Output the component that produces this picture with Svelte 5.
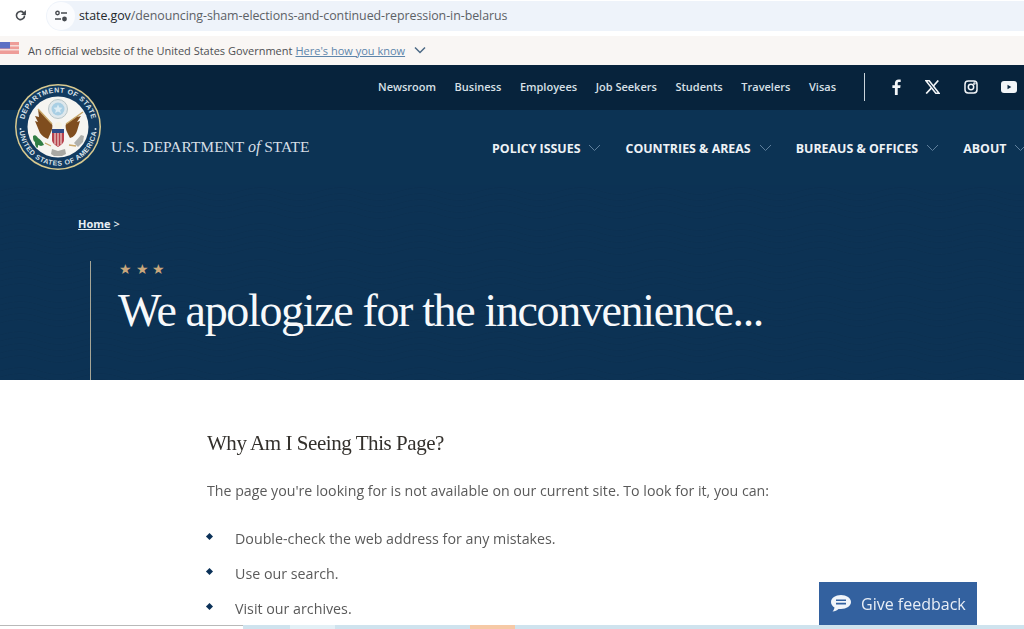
<script>
  const utility = ['Newsroom', 'Business', 'Employees', 'Job Seekers', 'Students', 'Travelers', 'Visas'];
  const mainNav = ['POLICY ISSUES', 'COUNTRIES & AREAS', 'BUREAUS & OFFICES', 'ABOUT'];
  const tips = ['Double-check the web address for any mistakes.', 'Use our search.', 'Visit our archives.'];
  const strip = [
    { w: 47, c: '#cfe3ee' },
    { w: 45, c: '#e3f0f6' },
    { w: 135, c: '#cfe3ee' },
    { w: 45, c: '#f6c9a6' },
    { w: 509, c: '#cfe3ee' }
  ];
</script>

<div class="page">
  <div class="browser">
    <svg class="reload" width="13" height="13" viewBox="0 0 24 24" fill="none" stroke="#474b50" stroke-width="3">
      <path d="M19.500 12a7.500 7.500 0 1 1-2.200-5.300L20 9.400" />
      <path d="M22 2v9h-9z" fill="#474b50" stroke="none" />
    </svg>
    <div class="omnibox">
      <span class="site-chip">
        <svg width="14" height="12" viewBox="0 0 14 12" fill="none" stroke="#474b50" stroke-width="1.400">
          <circle cx="3.500" cy="3" r="1.700" />
          <path d="M7 3h6M1 9h6" />
          <circle cx="10.500" cy="9" r="1.700" fill="#474b50" />
        </svg>
      </span>
      <span class="url"><b>state.gov</b>/denouncing-sham-elections-and-continued-repression-in-belarus</span>
    </div>
  </div>

  <div class="gov-banner">
    <svg class="flag" width="19" height="12" viewBox="0 0 19 12">
      <rect width="19" height="12" fill="#ee9c98" />
      <rect y="3" width="19" height="1.500" fill="#f6dcd8" />
      <rect y="7" width="19" height="1.500" fill="#f6dcd8" />
      <rect width="10" height="6.500" fill="#5b6fc4" />
    </svg>
    <span>An official website of the United States Government</span>
    <a href="#top">Here's how you know</a>
    <svg class="caret" width="12" height="8" viewBox="0 0 12 8" fill="none" stroke="#4d6a86" stroke-width="1.500">
      <path d="M1 1.500l5 5 5-5" />
    </svg>
  </div>

  <header class="site-head">
    <div class="utility">
      <nav class="utility-links">
        {#each utility as item}
          <a href="#top">{item}</a>
        {/each}
      </nav>
      <div class="socials">
        <svg width="12" height="16" viewBox="0 0 12 16" fill="#f2f5f8"><path d="M7.700 16V9h2.500l.4-2.800H7.700V4.500c0-.8.3-1.400 1.400-1.400h1.600V.6C10.400.5 9.500.4 8.600.4 6.400.4 4.900 1.700 4.900 4.200v2H2.400V9h2.500v7z" /></svg>
        <svg width="15" height="14" viewBox="0 0 15 14" fill="none" stroke="#f2f5f8"><path d="M1 .8h3.200l9.800 12.400h-3.200z" stroke-width="1.500" /><path d="M13.300.5L8.400 6M6.300 8.200L1.200 13.500" stroke-width="1.700" /></svg>
        <svg width="14" height="14" viewBox="0 0 14 14" fill="none" stroke="#f2f5f8" stroke-width="1.500"><rect x="1" y="1" width="12" height="12" rx="3.200" /><circle cx="7" cy="7" r="2.700" /><circle cx="10.400" cy="3.600" r=".5" /></svg>
        <svg width="16" height="12" viewBox="0 0 16 12"><rect width="16" height="12" rx="3" fill="#f2f5f8" /><path d="M6.500 3.700v4.600L10.300 6z" fill="#0a2740" /></svg>
      </div>
    </div>

    <div class="brand-row">
      <svg class="seal" width="88" height="88" viewBox="0 0 88 88">
        <defs>
          <path id="arcTop" d="M44 44m-34.500 0a34.500 34.500 0 0 1 69 0" />
          <path id="arcBottom" d="M44 44m-38.700 0a38.700 38.700 0 0 0 77.400 0" />
        </defs>
        <circle cx="44" cy="44" r="43" fill="#d8c98f" />
        <circle cx="44" cy="44" r="41.500" fill="#123a5f" />
        <circle cx="44" cy="44" r="30.500" fill="#f6f5f1" />
        <text class="seal-text"><textPath href="#arcTop" startOffset="50%" text-anchor="middle">DEPARTMENT OF STATE</textPath></text>
        <text class="seal-text"><textPath href="#arcBottom" startOffset="50%" text-anchor="middle">UNITED STATES OF AMERICA</textPath></text>
        <circle cx="6.500" cy="46" r="1" fill="#dbe3ea" />
        <circle cx="81.500" cy="46" r="1" fill="#dbe3ea" />
        <!-- crest and rays -->
        <circle cx="44" cy="26" r="9.500" fill="#dfe8ec" stroke="#b9c6c8" stroke-width="1" />
        <circle cx="44" cy="26" r="6.500" fill="#a9cfe4" />
        <path d="M44 21.500l1.300 3 3.300.3-2.500 2.100.8 3.200-2.900-1.700-2.900 1.700.8-3.200-2.500-2.100 3.300-.3z" fill="#dcecf4" />
        <!-- wings -->
        <path d="M24 26l14 15c1 2 0 6-1 8l-3 7c-3-1-6-3-8-6l-5-12 3 1-3-6 4 1z" fill="#7f4d1e" />
        <path d="M69 29L52 41c-1 2 0 6 1 8l3 6c4-1 6-4 7-7l3-10-3 1 4-6-4 1z" fill="#7f4d1e" />
        <path d="M24 26l14 15M69 29L52 41" stroke="#c9a86a" stroke-width="1.400" fill="none" />
        <circle cx="44.500" cy="42.500" r="3.500" fill="#f7f3e4" />
        <!-- shield -->
        <path d="M38 46h12v11c0 3-3 5-6 7-3-2-6-4-6-7z" fill="#b8404c" />
        <path d="M38 46h12v4H38z" fill="#2e4a86" />
        <path d="M41 50v11.500M44 50v13M47 50v11.500" stroke="#f4f1e6" stroke-width="1" />
        <!-- olive branch, arrows, tail -->
        <path d="M19 53c2-2 4 0 5 2 2 1 4 3 6 7l-3 1-3-1c0 2 0 3-1 3-2-2-2-4-2-6-2-1-2-4-2-6z" fill="#2f7d43" />
        <path d="M60 60l7-8 3 1-1 6-5 5z" fill="#aeb0ad" />
        <path d="M31 60l6 3M62 63l-7-1" stroke="#c9a86a" stroke-width="1.300" />
        <path d="M38 66l6 2 7-2 1 5-4 2h-8l-3-2z" fill="#a9a8a3" />
      </svg>
      <span class="wordmark">U.S. DEPARTMENT <i>of</i> STATE</span>
      <nav class="main-nav">
        {#each mainNav as item}
          <a href="#top">{item}
            <svg width="13" height="8" viewBox="0 0 13 8" fill="none" stroke="#5f7f9c"><path d="M1 1l5.500 5.500L12 1" /></svg>
          </a>
        {/each}
      </nav>
    </div>
  </header>

  <section class="hero">
    <div class="crumbs"><a href="#top">Home</a> &gt;</div>
    <div class="title-block">
      <div class="stars">★ ★ ★</div>
      <h1>We apologize for the inconvenience...</h1>
    </div>
  </section>

  <main class="content">
    <h2>Why Am I Seeing This Page?</h2>
    <p>The page you're looking for is not available on our current site. To look for it, you can:</p>
    <ul>
      {#each tips as tip}
        <li>{tip}</li>
      {/each}
    </ul>
  </main>

  <div class="strip">
    <span class="strip-start"></span>
    {#each strip as seg}
      <span style="width:{seg.w}px;background:{seg.c}"></span>
    {/each}
  </div>

  <button class="feedback">
    <svg width="22" height="19" viewBox="0 0 22 19">
      <path d="M11 1C5.500 1 1 3.900 1 8c0 2.300 1.400 4.200 3.500 5.500C4.300 15 3.500 16.500 2.500 17.500c2.500-.2 4.500-1.200 6-2.600.8.100 1.600.100 2.500.100 5.500 0 10-3 10-7S16.500 1 11 1z" fill="#f1f5fa" />
      <path d="M6 6.200h10M6 9.600h10" stroke="#33619f" stroke-width="1.600" />
    </svg>
    Give feedback
  </button>
</div>

<style>
  :global(body) {
    margin: 0;
    background: #fff;
  }

  .page {
    position: relative;
    display: flex;
    flex-direction: column;
    width: 1024px;
    height: 629px;
    overflow: hidden;
    font-family: "Open Sans", "Liberation Sans", sans-serif;
    filter: blur(0.35px);
  }

  a {
    color: inherit;
    text-decoration: none;
  }

  .browser {
    display: flex;
    align-items: center;
    flex: 0 0 36px;
    padding: 0 0 5px 14px;
    box-sizing: border-box;
    background: #fff;
  }

  .reload {
    margin-right: 19px;
  }

  .omnibox {
    display: flex;
    align-items: center;
    flex: 1;
    height: 30px;
    border-radius: 15px 0 0 15px;
    background: #eef3fa;
  }

  .site-chip {
    display: flex;
    align-items: center;
    justify-content: center;
    width: 28px;
    height: 28px;
    margin: 0 4px 0 1px;
    border-radius: 50%;
    background: #fbfcfe;
  }

  .url {
    font-size: 12.400px;
    letter-spacing: -0.05px;
    color: #5c6166;
  }

  .url b {
    font-weight: 400;
    color: #23272b;
  }

  .gov-banner {
    display: flex;
    align-items: center;
    flex: 0 0 29px;
    box-sizing: border-box;
    padding-bottom: 1px;
    background: #f9f6f4;
    font-size: 11px;
    color: #4d4f52;
  }

  .flag {
    margin: -4px 9px 0 0;
  }

  .gov-banner a {
    margin-left: 3px;
    color: #5d85ab;
    text-decoration: underline;
  }

  .caret {
    margin-left: 9px;
  }

  .site-head {
    flex: 0 0 120px;
    background: #0c3354;
    color: #eef2f6;
  }

  .utility {
    display: flex;
    align-items: center;
    justify-content: flex-end;
    height: 45px;
    box-sizing: border-box;
    padding-bottom: 2px;
    background: #07233c;
  }

  .utility-links {
    display: flex;
    gap: 18.600px;
    font-size: 11px;
    font-weight: 600;
    color: #d8e0e7;
  }

  .socials {
    display: flex;
    align-items: center;
    justify-content: space-between;
    width: 153px;
    height: 28px;
    margin: 0 7px 0 28px;
    padding-left: 25px;
    box-sizing: border-box;
    border-left: 1px solid #c9d3db;
  }

  .brand-row {
    position: relative;
    display: flex;
    align-items: center;
    height: 75px;
    padding-left: 111px;
  }

  .seal {
    position: absolute;
    left: 14px;
    top: -27px;
  }

  .seal-text {
    font-family: "Liberation Sans", sans-serif;
    font-size: 7px;
    font-weight: 700;
    letter-spacing: 0.5px;
    fill: #dbe3ea;
  }

  .wordmark {
    margin-top: -1px;
    width: 381px;
    flex: none;
    font-family: "Liberation Serif", serif;
    font-size: 15.500px;
    color: #d6dfe7;
    white-space: nowrap;
  }

  .wordmark i {
    font-size: 16px;
  }

  .main-nav {
    display: flex;
    gap: 24px;
    margin-top: 1px;
    font-size: 12.400px;
    font-weight: 700;
    white-space: nowrap;
    flex: none;
  }

  .main-nav a {
    display: flex;
    align-items: center;
    gap: 8px;
  }

  .hero {
    position: relative;
    display: flex;
    flex-direction: column;
    flex: 0 0 195px;
    background-color: #0c3254;
    background-image: url("data:image/svg+xml,%3Csvg xmlns='http://www.w3.org/2000/svg' width='160' height='36'%3E%3Cg fill='none' stroke='%23082a49' stroke-opacity='.35'%3E%3Cpath d='M0 6c40-12 40 12 80 0s40 12 80 0M0 12c40-12 40 12 80 0s40 12 80 0M0 18c40-12 40 12 80 0s40 12 80 0M0 24c40-12 40 12 80 0s40 12 80 0M0 30c40-12 40 12 80 0s40 12 80 0'/%3E%3C/g%3E%3C/svg%3E");
    color: #fff;
  }

  .crumbs {
    margin: 31px 0 0 78px;
    font-size: 11px;
    color: #e7edf3;
    font-weight: 600;
  }

  .crumbs a {
    font-weight: 700;
    text-decoration: underline;
  }

  .title-block {
    flex: 1;
    margin: 30px 0 0 90px;
    padding: 0 0 0 27px;
    border-left: 1px solid #a6a596;
  }

  .stars {
    margin: 0 0 0 1px;
    font-size: 14px;
    line-height: 16px;
    color: #c9a77c;
  }

  h1 {
    margin: 6px 0 0;
    font-family: "Liberation Serif", serif;
    font-size: 46px;
    font-weight: 400;
    line-height: 56px;
    letter-spacing: -1.350px;
    color: #f7f9fb;
    white-space: nowrap;
  }

  .content {
    flex: 1;
    min-height: 0;
    padding: 50px 0 0 207px;
    color: #5a5a5a;
  }

  h2 {
    margin: 0;
    font-family: "Liberation Serif", serif;
    font-size: 21px;
    font-weight: 400;
    line-height: 26px;
    letter-spacing: -0.450px;
    color: #33302c;
  }

  p {
    margin: 24px 0 0;
    font-size: 14.200px;
    line-height: 22px;
  }

  ul {
    list-style: none;
    margin: 27px 0 0;
    padding: 0 0 0 28px;
    font-size: 14.250px;
    line-height: 20px;
  }

  li {
    position: relative;
    margin-bottom: 15px;
  }

  li::before {
    content: "";
    position: absolute;
    left: -28.500px;
    top: 5px;
    width: 5px;
    height: 5px;
    background: #0b3158;
    transform: rotate(45deg);
  }

  .strip {
    display: flex;
    flex: 0 0 4px;
  }

  .strip-start {
    width: 243px;
    box-sizing: border-box;
    border-top: 1px solid #b9b9b9;
    background: #fff;
  }

  .feedback {
    position: absolute;
    left: 819px;
    top: 582px;
    display: flex;
    align-items: center;
    gap: 9px;
    width: 158px;
    height: 43px;
    padding: 0 0 0 11px;
    border: 0;
    background: #33619f;
    font-family: inherit;
    font-size: 16px;
    color: #e8eef6;
  }
</style>
